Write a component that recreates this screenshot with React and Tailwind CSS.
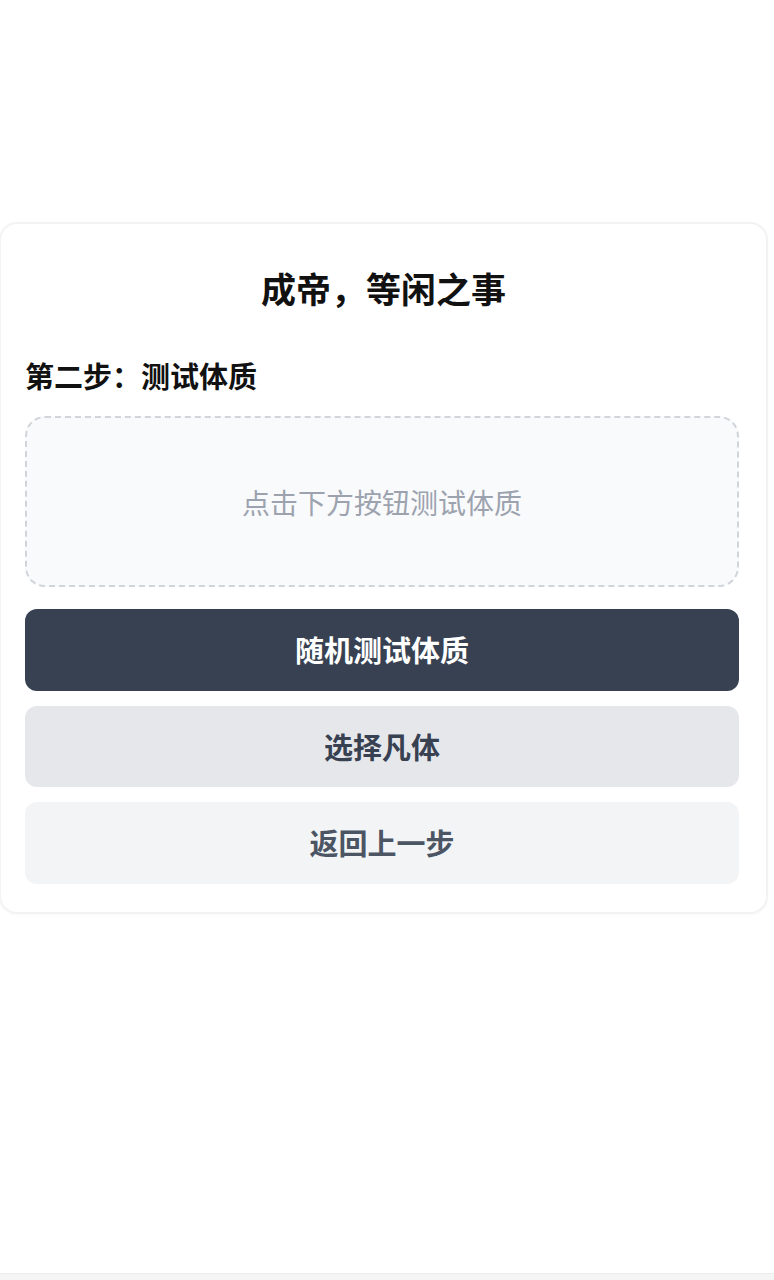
export default function App() {
  const font = { fontFamily: '"Noto Sans CJK SC", "Noto Sans", sans-serif' };

  return (
    <div className="h-[1280px] flex flex-col bg-white" style={font}>
      <main className="flex-1 pt-[222px]">
        <div className="w-[769px] -ml-[1px] rounded-[18px] border-2 border-[#f2f3f5] bg-white px-[24px] pt-[42px] pb-[28px] shadow-[0_1px_3px_rgba(0,0,0,0.03)]">
          <h1 className="text-center text-[35px] leading-[44px] font-bold text-[#111]">
            成帝，等闲之事
          </h1>

          <h2 className="mt-[47px] text-[29px] leading-[36px] font-bold text-[#111]">
            第二步：测试体质
          </h2>

          <div className="mt-[23px] h-[171px] w-[714px] rounded-[20px] border-2 border-dashed border-[#d1d5db] bg-[#f9fafb] flex items-center justify-center">
            <span className="text-[28px] text-[#9ca3af]">点击下方按钮测试体质</span>
          </div>

          <div className="mt-[22px] flex flex-col gap-[15px] w-[714px]">
            <button className="h-[82px] rounded-[12px] bg-[#374151] text-white text-[29px] font-bold">
              随机测试体质
            </button>
            <button className="h-[81px] rounded-[12px] bg-[#e5e7eb] text-[#374151] text-[29px] font-bold">
              选择凡体
            </button>
            <button className="h-[82px] rounded-[12px] bg-[#f3f4f6] text-[#4b5563] text-[29px] font-bold">
              返回上一步
            </button>
          </div>
        </div>
      </main>
      <div className="h-[7px] border-t border-[#ececec] bg-[#f5f5f5]" />
    </div>
  );
}
